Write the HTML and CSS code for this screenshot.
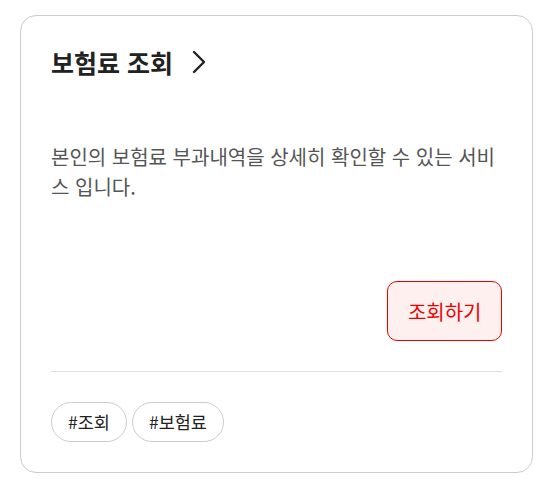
FILE: index.html
```html
<!DOCTYPE html>
<html lang="ko">
<head>
<meta charset="utf-8">
<link rel="stylesheet" href="styles.css">
</head>
<body>
<div class="card">
  <div class="title">
    <span>보험료 조회</span>
    <svg class="chev" width="18" height="24" viewBox="0 0 18 24"><path d="M4 2 L14 12 L4 22" fill="none" stroke="#222" stroke-width="2.4" stroke-linecap="round" stroke-linejoin="round"/></svg>
  </div>
  <p class="desc">본인의 보험료 부과내역을 상세히 확인할 수 있는 서비스 입니다.</p>
  <div class="actions"><button class="btn">조회하기</button></div>
  <div class="tags">
    <span class="tag">#조회</span>
    <span class="tag">#보험료</span>
  </div>
</div>
</body>
</html>
```
FILE: styles.css
```css
html, body { margin: 0; padding: 0; background: #fff; }
body { font-family: "Noto Sans CJK KR", "Noto Sans", sans-serif; }
.card {
  width: 513px;
  box-sizing: border-box;
  margin: 15px 0 0 20px;
  border: 1px solid #cccccc;
  border-radius: 16px;
  padding: 30px;
}
.title {
  display: flex;
  align-items: center;
  gap: 17px;
  font-size: 25px;
  font-weight: 700;
  color: #222;
  height: 32px;
}
.chev { display: block; }
.desc {
  margin: 64px 0 0 0;
  font-size: 20px;
  line-height: 30px;
  color: #555;
}
.actions { display: flex; justify-content: flex-end; margin-top: 79px; }
.btn {
  font-family: inherit;
  font-size: 20px;
  color: #ee0000;
  background: #fff0f0;
  border: 1px solid #ee0000;
  border-radius: 10px;
  height: 60px;
  padding: 0 19.5px;
}
.tags {
  margin-top: 30px;
  border-top: 1px solid #dddddd;
  padding-top: 30px;
  display: flex;
  gap: 5px;
}
.tag {
  font-size: 17.5px;
  color: #222;
  border: 1px solid #cccccc;
  border-radius: 20px;
  height: 38px;
  line-height: 38px;
  padding: 0 16px;
}
```
